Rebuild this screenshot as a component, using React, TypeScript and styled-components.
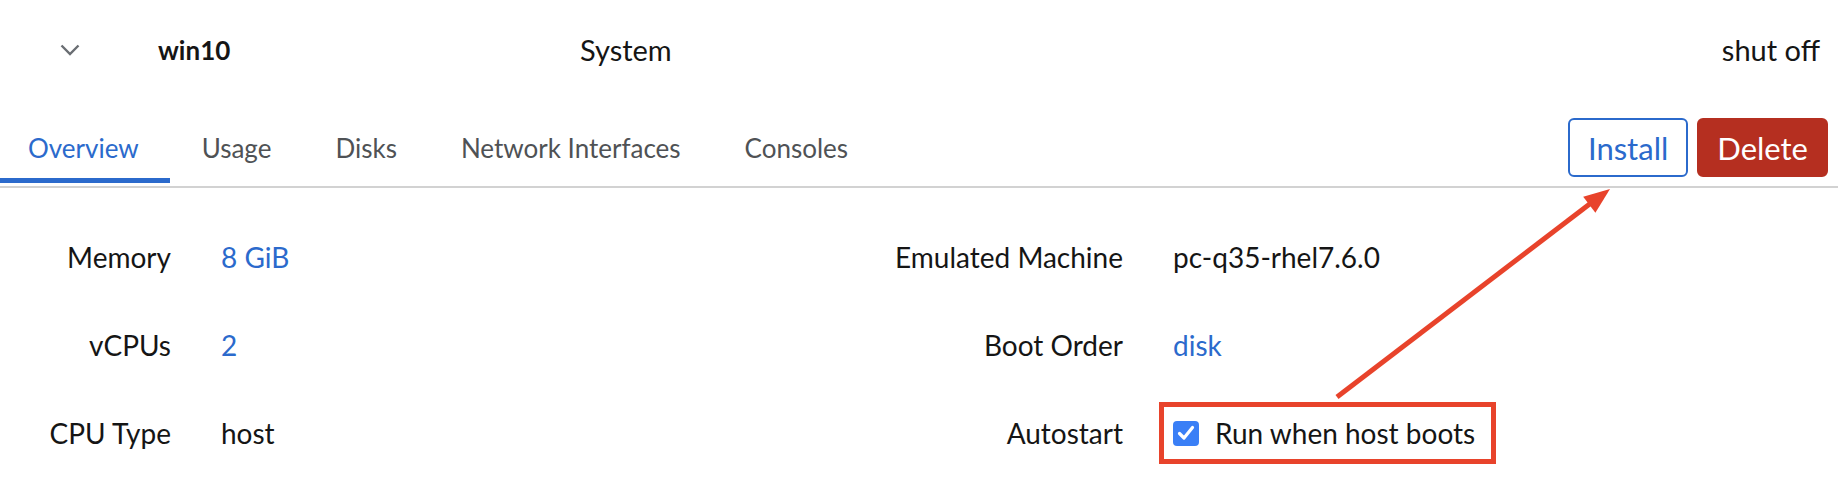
import { FC } from "react";
import styled, { createGlobalStyle } from "styled-components";

const GlobalStyle = createGlobalStyle`
    html, body {
        margin: 0;
        padding: 0;
        background: #ffffff;
    }
    body {
        font-family: Lato, "Open Sans", "Liberation Sans", sans-serif;
        color: #151515;
    }
`;

const Page = styled.div`
    position: relative;
    width: 1838px;
    height: 502px;
    overflow: hidden;
    background: #ffffff;
`;

const HeaderRow = styled.div`
    display: grid;
    grid-template-columns: 158px 422px 1fr auto;
    align-items: center;
    height: 100px;
    padding-right: 18px;
    font-size: 29px;
    line-height: 32px;
`;

const ToggleCell = styled.div`
    padding-left: 60px;
    display: flex;
    align-items: center;
    height: 32px;
`;

const VmName = styled.div`
    font-weight: 700;
    font-size: 26px;
`;

const StateCell = styled.div`
    text-align: right;
`;

const TabBar = styled.div`
    display: flex;
    align-items: stretch;
    height: 83px;
    padding-bottom: 3px;
    border-bottom: 2px solid #d2d2d2;
`;

const TabList = styled.div`
    display: flex;
    flex: 1;
`;

const Tab = styled.div<{ $active?: boolean }>`
    display: flex;
    align-items: center;
    padding: 18px 32px 0;
    font-size: 26px;
    line-height: 32px;
    color: ${({ $active }) => ($active ? "#2b6acc" : "#4f5255")};
    border-bottom: 5px solid ${({ $active }) => ($active ? "#2b6acc" : "transparent")};
    &:first-child {
        padding-left: 28px;
        padding-right: 31px;
    }
`;

const Actions = styled.div`
    display: flex;
    align-self: flex-start;
    gap: 9px;
    margin-top: 18px;
    padding-right: 10px;
`;

const Button = styled.button<{ $variant: "secondary" | "danger" }>`
    height: 59px;
    box-sizing: border-box;
    padding: 0 18px;
    font-family: inherit;
    font-size: 31px;
    border-radius: 6px;
    cursor: pointer;
    color: ${({ $variant }) => ($variant === "danger" ? "#ffffff" : "#2b6acc")};
    background: ${({ $variant }) => ($variant === "danger" ? "#b52f20" : "#ffffff")};
    border: 2px solid ${({ $variant }) => ($variant === "danger" ? "#b52f20" : "#2b6acc")};
`;

const Details = styled.div`
    display: grid;
    grid-template-columns: 848px 1fr;
    padding: 53px 0 0 45px;
`;

const DescriptionList = styled.dl<{ $labelWidth: number }>`
    display: grid;
    grid-template-columns: ${({ $labelWidth }) => $labelWidth}px 1fr;
    grid-auto-rows: 32px;
    column-gap: 50px;
    row-gap: 56px;
    align-items: center;
    margin: 0;
    font-size: 28px;
    line-height: 32px;
`;

const Term = styled.dt`
    text-align: right;
    white-space: nowrap;
`;

const Value = styled.dd<{ $link?: boolean }>`
    display: flex;
    align-items: center;
    margin: 0;
    white-space: nowrap;
    color: ${({ $link }) => ($link ? "#2b6acc" : "#151515")};
`;

const Highlight = styled.label`
    display: flex;
    align-items: center;
    gap: 16px;
    margin-left: -14px;
    padding: 10px 16px 10px 9px;
    border: 5px solid #e8432b;
`;

const CheckBox = styled.span`
    display: inline-flex;
    align-items: center;
    justify-content: center;
    width: 26px;
    height: 25px;
    border-radius: 4px;
    background: #3a7ff6;
`;

const Overlay = styled.svg`
    position: absolute;
    left: 0;
    top: 0;
    pointer-events: none;
`;

const Chevron: FC = () => (
    <svg width="20" height="12" viewBox="0 0 20 12">
        <path d="M1.5 1.5 L10 10 L18.5 1.5" fill="none" stroke="#6a6e73" strokeWidth="2.4" />
    </svg>
);

const CheckMark: FC = () => (
    <svg width="18" height="16" viewBox="0 0 18 16">
        <path d="M2.5 8.5 L7 13 L15.5 2.5" fill="none" stroke="#ffffff" strokeWidth="3.2" strokeLinecap="round" strokeLinejoin="round" />
    </svg>
);

const tabs = ["Overview", "Usage", "Disks", "Network Interfaces", "Consoles"];

export default function App() {
    return (
        <Page>
            <GlobalStyle />
            <HeaderRow>
                <ToggleCell><Chevron /></ToggleCell>
                <VmName>win10</VmName>
                <div>System</div>
                <StateCell>shut off</StateCell>
            </HeaderRow>

            <TabBar>
                <TabList>
                    {tabs.map((t, i) => (
                        <Tab key={t} $active={i === 0}>{t}</Tab>
                    ))}
                </TabList>
                <Actions>
                    <Button $variant="secondary">Install</Button>
                    <Button $variant="danger">Delete</Button>
                </Actions>
            </TabBar>

            <Details>
                <DescriptionList $labelWidth={126}>
                    <Term>Memory</Term>
                    <Value $link>8 GiB</Value>
                    <Term>vCPUs</Term>
                    <Value $link>2</Value>
                    <Term>CPU Type</Term>
                    <Value>host</Value>
                </DescriptionList>
                <DescriptionList $labelWidth={230}>
                    <Term>Emulated Machine</Term>
                    <Value>pc-q35-rhel7.6.0</Value>
                    <Term>Boot Order</Term>
                    <Value $link>disk</Value>
                    <Term>Autostart</Term>
                    <Value>
                        <Highlight>
                            <CheckBox><CheckMark /></CheckBox>
                            Run when host boots
                        </Highlight>
                    </Value>
                </DescriptionList>
            </Details>

            <Overlay width="1838" height="502" viewBox="0 0 1838 502">
                <line x1="1337" y1="397" x2="1591" y2="203" stroke="#e8432b" strokeWidth="5" />
                <polygon points="1610,189 1595.4,212.8 1583.2,196.8" fill="#e8432b" />
            </Overlay>
        </Page>
    );
}
